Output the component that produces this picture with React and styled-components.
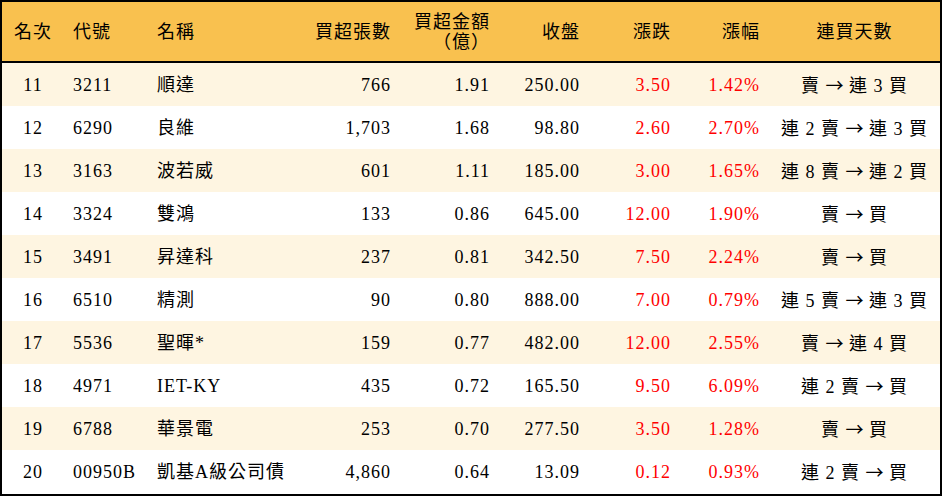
import React from "react";
import styled, { createGlobalStyle } from "styled-components";

const GlobalStyle = createGlobalStyle`
  html, body { margin: 0; padding: 0; background: #ffffff; }
  body {
    font-family: "Liberation Serif", "Noto Sans CJK TC", serif;
  }
`;

const Table = styled.div`
  box-sizing: border-box;
  width: 942px;
  height: 496px;
  border: 2px solid #000;
  display: flex;
  flex-direction: column;
  background: #fff;
  font-family: "Liberation Serif", "Noto Sans CJK TC", serif;
  font-size: 18px;
  letter-spacing: 1px;
  color: #000;
`;

const COLS = "62px 85px 151px 100px 99px 90px 91px 89px 1fr";

const HeaderRow = styled.div`
  display: grid;
  grid-template-columns: ${COLS};
  height: 59px;
  background: #f9c14f;
  border-bottom: 2px solid #000;
  flex-shrink: 0;
`;

const BodyRow = styled.div`
  display: grid;
  grid-template-columns: ${COLS};
  height: 43px;
  flex-shrink: 0;
  background: ${(p) => (p.$shaded ? "#fef5e1" : "#ffffff")};
  &:last-child {
    height: 44px;
  }
`;

const Cell = styled.div`
  display: flex;
  align-items: center;
  justify-content: ${(p) =>
    p.$align === "right" ? "flex-end" : p.$align === "center" ? "center" : "flex-start"};
  text-align: ${(p) => p.$align || "left"};
  padding-left: ${(p) => (p.$align === "left" ? `${p.$pad ?? 8}px` : "0")};
  padding-right: ${(p) => (p.$align === "right" ? "9px" : "0")};
  color: ${(p) => (p.$red ? "#ff0000" : "#000")};
  white-space: pre;
  line-height: 20px;
`;

const HeadText = styled.span`
  display: block;
  line-height: 20px;
`;

const Arrow = styled.span`
  font-family: "Noto Sans CJK TC", "DejaVu Sans", sans-serif;
  font-size: 18px;
  letter-spacing: 0;
`;

const columns = [
  { key: "rank", title: "名次", align: "center" },
  { key: "code", title: "代號", align: "left", pad: 9 },
  { key: "name", title: "名稱", align: "left", pad: 8 },
  { key: "vol", title: "買超張數", align: "right" },
  { key: "amt", title: ["買超金額", "（億）"], align: "right" },
  { key: "close", title: "收盤", align: "right" },
  { key: "chg", title: "漲跌", align: "right", red: true },
  { key: "pct", title: "漲幅", align: "right", red: true },
  { key: "days", title: "連買天數", align: "center" },
];

const rows = [
  ["11", "3211", "順達", "766", "1.91", "250.00", "3.50", "1.42%", "賣 → 連 3 買"],
  ["12", "6290", "良維", "1,703", "1.68", "98.80", "2.60", "2.70%", "連 2 賣 → 連 3 買"],
  ["13", "3163", "波若威", "601", "1.11", "185.00", "3.00", "1.65%", "連 8 賣 → 連 2 買"],
  ["14", "3324", "雙鴻", "133", "0.86", "645.00", "12.00", "1.90%", "賣 → 買"],
  ["15", "3491", "昇達科", "237", "0.81", "342.50", "7.50", "2.24%", "賣 → 買"],
  ["16", "6510", "精測", "90", "0.80", "888.00", "7.00", "0.79%", "連 5 賣 → 連 3 買"],
  ["17", "5536", "聖暉*", "159", "0.77", "482.00", "12.00", "2.55%", "賣 → 連 4 買"],
  ["18", "4971", "IET-KY", "435", "0.72", "165.50", "9.50", "6.09%", "連 2 賣 → 買"],
  ["19", "6788", "華景電", "253", "0.70", "277.50", "3.50", "1.28%", "賣 → 買"],
  ["20", "00950B", "凱基A級公司債", "4,860", "0.64", "13.09", "0.12", "0.93%", "連 2 賣 → 買"],
];

function Days({ text }) {
  const [from, to] = text.split("→");
  return (
    <span>
      {from}
      <Arrow>→</Arrow>
      {to}
    </span>
  );
}

export default function App() {
  return (
    <>
      <GlobalStyle />
      <Table>
        <HeaderRow>
          {columns.map((c) => (
            <Cell key={c.key} $align={c.align} $pad={c.pad}>
              {Array.isArray(c.title) ? (
                <div>
                  {c.title.map((t) => (
                    <HeadText key={t}>{t}</HeadText>
                  ))}
                </div>
              ) : (
                c.title
              )}
            </Cell>
          ))}
        </HeaderRow>
        {rows.map((r, i) => (
          <BodyRow key={r[0]} $shaded={i % 2 === 0}>
            {columns.map((c, j) => (
              <Cell key={c.key} $align={c.align} $pad={c.pad} $red={c.red}>
                {c.key === "days" ? <Days text={r[j]} /> : r[j]}
              </Cell>
            ))}
          </BodyRow>
        ))}
      </Table>
    </>
  );
}
